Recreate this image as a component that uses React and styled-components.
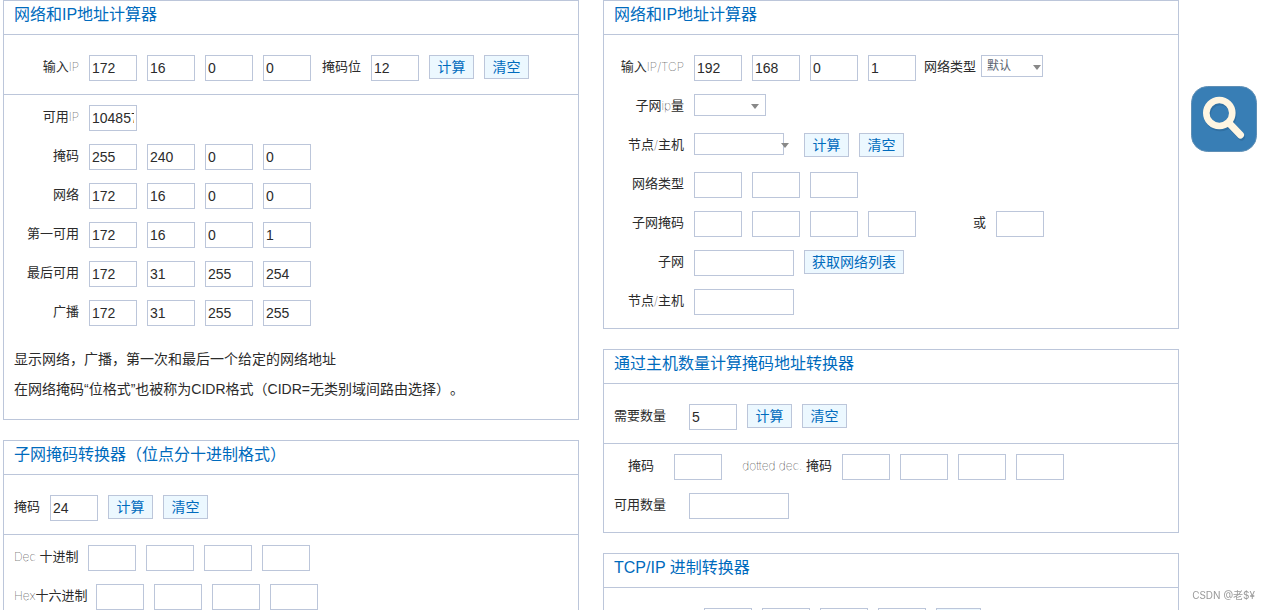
import React, { useId } from 'react'
import styled, { createGlobalStyle } from 'styled-components'

const line = '#bcc6da'
const blue = '#006bbd'

const GlobalStyle = createGlobalStyle`
  * {
    box-sizing: border-box;
  }
  body {
    margin: 0;
    background: #fff;
    color: #2b2b2b;
    font-family: 'Liberation Sans', 'Noto Sans CJK SC', sans-serif;
    font-size: 14px;
    text-spacing-trim: space-all;
  }
`

const Page = styled.div`
  display: flex;
  height: 100vh;
  padding-left: 3px;
  overflow: hidden;
`

const Columns = styled.main`
  display: flex;
  flex: 1;
  gap: 24px;
  align-items: flex-start;
`

const Column = styled.div`
  display: flex;
  flex: 1;
  flex-direction: column;
  gap: 20px;
  min-width: 0;
`

const Panel = styled.section`
  border: 1px solid ${line};
`

const Title = styled.h2`
  margin: 0;
  padding: 0 10px 5px;
  border-bottom: 1px solid ${line};
  color: ${blue};
  font-size: 16px;
  font-weight: 400;
  line-height: 28px;
`

const Group = styled.div`
  padding: ${props => (props.$first ? 20 : 10)}px 10px 0;
  & + & {
    border-top: 1px solid ${line};
  }
`

const Row = styled.div`
  display: flex;
  align-items: flex-start;
  height: 26px;
  margin-bottom: 13px;
`

const Label = styled.label`
  flex: none;
  width: ${props => props.$width}px;
  margin-right: ${props => props.$after ?? 10}px;
  font-size: 13px;
  line-height: 24px;
  text-align: ${props => props.$align || 'right'};
  white-space: nowrap;
`

const Thin = styled.span`
  color: #000;
  font-family: Inter, Roboto, sans-serif;
  font-size: 12px;
  font-weight: 100;
  line-height: 12px;
`

const Input = styled.input`
  flex: none;
  width: ${props => (props.$wide ? 100 : 48)}px;
  height: 26px;
  margin-right: ${props => props.$after ?? 10}px;
  padding: 0 2px;
  border: 1px solid ${line};
  background: #fff;
  color: #2b2b2b;
  font: inherit;
`

const Button = styled.button`
  flex: none;
  min-width: 45px;
  height: 24px;
  margin-right: 10px;
  padding: 0 7px;
  border: 1px solid ${line};
  background: #ecf8ff;
  color: ${blue};
  font: inherit;
  line-height: 22px;
  cursor: pointer;
`

const SelectBox = styled.div`
  position: relative;
  flex: none;
  width: ${props => props.$width}px;
  height: 22px;
  margin-right: 10px;
`

const SelectInput = styled.select`
  display: block;
  width: ${props => props.$width}px;
  height: 22px;
  padding: 0 5px;
  border: 1px solid ${line};
  border-radius: 0;
  appearance: none;
  background: #fff;
  color: #5a6470;
  font: inherit;
  font-size: 12px;
`

const Arrow = styled.span`
  position: absolute;
  top: 10px;
  right: ${props => props.$right}px;
  border: 4px solid transparent;
  border-top: 5px solid #888;
  border-bottom: 0;
  pointer-events: none;
`

const Notes = styled.div`
  padding: 5px 10px 15px;
  line-height: 30px;

  p {
    margin: 0;
  }
`

const Side = styled.aside`
  flex: none;
  width: 91px;
  padding: 86px 12px 0;
`

const SearchButton = styled.button`
  display: block;
  padding: 0;
  border: 0;
  background: none;
  cursor: pointer;

  svg {
    display: block;
  }
`

const Watermark = styled.div`
  position: fixed;
  right: 15px;
  bottom: 7px;
  color: #999;
  font-family: Inter, 'Noto Sans CJK SC', sans-serif;
  font-size: 10px;
  line-height: 16px;
`

const Octets = ({ id, name, values, last }) =>
  values.map((value, index) => (
    <Input
      key={index}
      id={index === 0 ? id : undefined}
      aria-label={index === 0 ? undefined : `${name} ${index + 1}`}
      defaultValue={value}
      $after={index === values.length - 1 ? last : undefined}
    />
  ))

const Field = ({ label, name, width, align, after, values, last, wide }) => {
  const id = useId()
  return (
    <>
      <Label
        htmlFor={id}
        aria-label={label ? undefined : name}
        $width={width}
        $align={align}
        $after={after}
      >
        {label}
      </Label>
      {wide ? (
        <Input id={id} $wide />
      ) : (
        <Octets id={id} name={name || label} values={values} last={last} />
      )}
    </>
  )
}

const Select = ({ label, labelWidth, labelAfter, width, boxWidth, arrow, option = '' }) => {
  const id = useId()
  return (
    <>
      <Label htmlFor={id} $width={labelWidth} $after={labelAfter}>
        {label}
      </Label>
      <SelectBox $width={boxWidth || width}>
        <SelectInput id={id} $width={width}>
          <option>{option}</option>
        </SelectInput>
        <Arrow $right={arrow} />
      </SelectBox>
    </>
  )
}

const Actions = () => (
  <>
    <Button type='button'>计算</Button>
    <Button type='button'>清空</Button>
  </>
)

const empty = count => Array(count).fill('')

const results = [
  { label: '掩码', values: [255, 240, 0, 0] },
  { label: '网络', values: [172, 16, 0, 0] },
  { label: '第一可用', values: [172, 16, 0, 1] },
  { label: '最后可用', values: [172, 31, 255, 254] },
  { label: '广播', values: [172, 31, 255, 255] }
]

const NetworkPanel = () => (
  <Panel>
    <Title>网络和IP地址计算器</Title>
    <Group $first>
      <Row>
        <Field
          label={<>输入<Thin>IP</Thin></>}
          name='输入IP'
          width={65}
          values={[172, 16, 0, 0]}
        />
        <Field label='掩码位' width={40} values={[12]} />
        <Actions />
      </Row>
    </Group>
    <Group>
      <Row>
        <Field
          label={<>可用<Thin>IP</Thin></>}
          name='可用IP'
          width={65}
          values={[1048574]}
        />
      </Row>
      {results.map(item => (
        <Row key={item.label}>
          <Field {...item} width={65} />
        </Row>
      ))}
    </Group>
    <Notes>
      <p>显示网络，广播，第一次和最后一个给定的网络地址</p>
      <p>在网络掩码“位格式”也被称为CIDR格式（CIDR=无类别域间路由选择）。</p>
    </Notes>
  </Panel>
)

const MaskPanel = () => (
  <Panel>
    <Title>子网掩码转换器（位点分十进制格式）</Title>
    <Group $first>
      <Row>
        <Field label='掩码' width={26} values={[24]} />
        <Actions />
      </Row>
    </Group>
    <Group>
      <Row>
        <Field
          label={<><Thin>Dec</Thin> 十进制</>}
          name='十进制'
          width={64}
          values={empty(4)}
        />
      </Row>
      <Row>
        <Field
          label={<><Thin>Hex</Thin>十六进制</>}
          name='十六进制'
          width={72}
          values={empty(4)}
        />
      </Row>
    </Group>
  </Panel>
)

const SubnetPanel = () => (
  <Panel>
    <Title>网络和IP地址计算器</Title>
    <Group $first>
      <Row>
        <Field
          label={<>输入<Thin>IP/TCP</Thin></>}
          name='输入IP/TCP'
          width={70}
          values={[192, 168, 0, 1]}
          last={8}
        />
        <Select
          label='网络类型'
          labelWidth={52}
          labelAfter={5}
          width={62}
          arrow={2}
          option='默认'
        />
      </Row>
      <Row>
        <Select
          label={<>子网<Thin>ip</Thin>量</>}
          labelWidth={70}
          width={72}
          arrow={7}
        />
      </Row>
      <Row>
        <Select
          label={<>节点<Thin>/</Thin>主机</>}
          labelWidth={70}
          width={90}
          boxWidth={100}
          arrow={5}
        />
        <Actions />
      </Row>
      <Row>
        <Field label='网络类型' width={70} values={empty(3)} />
      </Row>
      <Row>
        <Field label='子网掩码' width={70} values={empty(4)} last={0} />
        <Field label='或' width={70} values={empty(1)} />
      </Row>
      <Row>
        <Field label='子网' width={70} wide />
        <Button type='button'>获取网络列表</Button>
      </Row>
      <Row>
        <Field label={<>节点<Thin>/</Thin>主机</>} width={70} wide />
      </Row>
    </Group>
  </Panel>
)

const HostsPanel = () => (
  <Panel>
    <Title>通过主机数量计算掩码地址转换器</Title>
    <Group $first>
      <Row>
        <Field label='需要数量' width={65} align='left' values={[5]} />
        <Actions />
      </Row>
    </Group>
    <Group>
      <Row>
        <Field label='掩码' width={40} after={20} values={empty(1)} />
        <Field
          label={<><Thin>dotted dec.</Thin> 掩码</>}
          name='dotted dec. 掩码'
          width={100}
          values={empty(4)}
        />
      </Row>
      <Row>
        <Field label='可用数量' width={65} align='left' wide />
      </Row>
    </Group>
  </Panel>
)

const RadixPanel = () => (
  <Panel>
    <Title>TCP/IP 进制转换器</Title>
    <Group $first>
      <Row>
        <Field name='IP' width={80} values={empty(4)} />
        <Button type='button' aria-label='计算' />
      </Row>
    </Group>
  </Panel>
)

const SearchIcon = () => (
  <svg width='66' height='66' viewBox='0 0 66 66' aria-hidden='true'>
    <rect x='0.5' y='0.5' width='65' height='65' rx='16' fill='#387eb5' stroke='#5f8fb5' />
    <g fill='none' strokeLinecap='round'>
      <g stroke='#3070a3' transform='translate(1 2)'>
        <circle cx='28.3' cy='27' r='13' strokeWidth='6.6' />
        <path d='M38 37 L49.5 49' strokeWidth='7' />
      </g>
      <g stroke='#fff6e2'>
        <circle cx='28.3' cy='27' r='13' strokeWidth='6.6' />
        <path d='M38 37 L49.5 49' strokeWidth='7' />
      </g>
    </g>
  </svg>
)

function App () {
  return (
    <>
      <GlobalStyle />
      <Page>
        <Columns>
          <Column>
            <NetworkPanel />
            <MaskPanel />
          </Column>
          <Column>
            <SubnetPanel />
            <HostsPanel />
            <RadixPanel />
          </Column>
        </Columns>
        <Side>
          <SearchButton type='button' aria-label='搜索'>
            <SearchIcon />
          </SearchButton>
        </Side>
        <Watermark>CSDN @老$¥</Watermark>
      </Page>
    </>
  )
}

export default App
